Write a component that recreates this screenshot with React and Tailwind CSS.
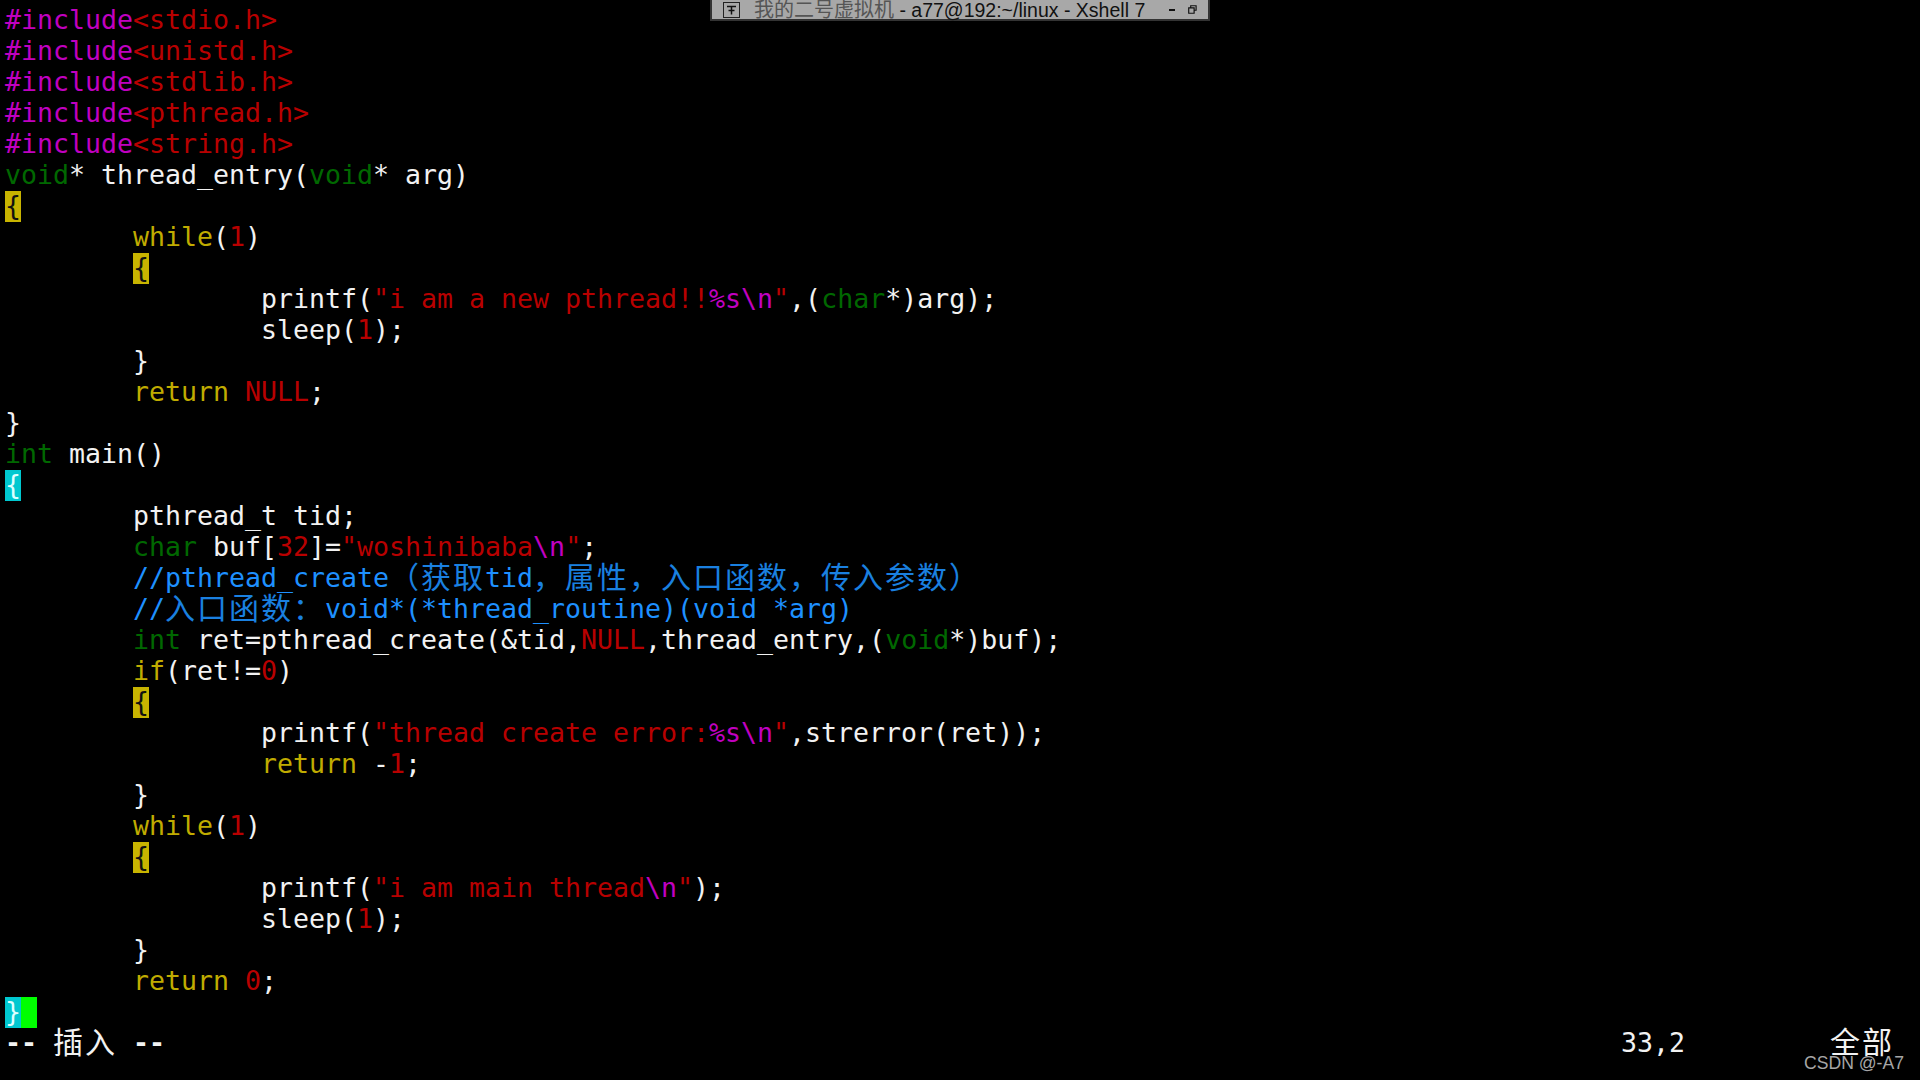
import React from 'react';

const W = 'text-[#f2f2f2]';
const P = 'text-[#c000c0]';
const R = 'text-[#b80000]';
const G = 'text-[#006800]';
const Y = 'text-[#c0ac00]';
const B = 'text-[#1e90ff]';
// the thin CJK strokes read darker than the latin comment text
const BC = 'text-[#1a80e0]';

const TAB = '        ';
const include = (name) => [['#include', P], [`<${name}.h>`, R]];

const MATCH = 'text-[#111] bg-[#c8b400]';
const CYAN = 'text-[#dff] bg-[#00c8d0]';

const lines = [
  include('stdio'),
  include('unistd'),
  include('stdlib'),
  include('pthread'),
  include('string'),
  [['void', G], ['* thread_entry(', W], ['void', G], ['* arg)', W]],
  [['{', MATCH, 'cell']],
  [[TAB, W], ['while', Y], ['(', W], ['1', R], [')', W]],
  [[TAB, W], ['{', MATCH, 'cell']],
  [[TAB + TAB + 'printf(', W], ['"i am a new pthread!!', R], ['%s\\n', P], ['"', R], [',(', W], ['char', G], ['*)arg);', W]],
  [[TAB + TAB + 'sleep(', W], ['1', R], [');', W]],
  [[TAB + '}', W]],
  [[TAB, W], ['return ', Y], ['NULL', R], [';', W]],
  [['}', W]],
  [['int', G], [' main()', W]],
  [['{', CYAN, 'cell']],
  [[TAB + 'pthread_t tid;', W]],
  [[TAB, W], ['char', G], [' buf[', W], ['32', R], [']=', W], ['"woshinibaba', R], ['\\n', P], ['"', R], [';', W]],
  [[TAB + '//pthread_create', B], ['（获取', BC, 'cjk'], ['tid', B], ['，属性，入口函数，传入参数）', BC, 'cjk']],
  [[TAB + '//', B], ['入口函数：', BC, 'cjk'], ['void*(*thread_routine)(void *arg)', B]],
  [[TAB, W], ['int', G], [' ret=pthread_create(&tid,', W], ['NULL', R], [',thread_entry,(', W], ['void', G], ['*)buf);', W]],
  [[TAB, W], ['if', Y], ['(ret!=', W], ['0', R], [')', W]],
  [[TAB, W], ['{', MATCH, 'cell']],
  [[TAB + TAB + 'printf(', W], ['"thread create error:', R], ['%s\\n', P], ['"', R], [',strerror(ret));', W]],
  [[TAB + TAB, W], ['return ', Y], ['-', W], ['1', R], [';', W]],
  [[TAB + '}', W]],
  [[TAB, W], ['while', Y], ['(', W], ['1', R], [')', W]],
  [[TAB, W], ['{', MATCH, 'cell']],
  [[TAB + TAB + 'printf(', W], ['"i am main thread', R], ['\\n', P], ['"', R], [');', W]],
  [[TAB + TAB + 'sleep(', W], ['1', R], [');', W]],
  [[TAB + '}', W]],
  [[TAB, W], ['return ', Y], ['0', R], [';', W]],
  [['}', CYAN, 'cell'], [' ', 'bg-[#00ff00]', 'cell']],
];

const Cjk = ({ text, color = '' }) => (
  <span className={`${color} text-[30px] font-normal leading-[0] align-[-1px] tracking-[2px] font-['Noto_Sans_CJK_SC',sans-serif]`}>{text}</span>
);

const Chunk = ({ text, color, kind }) => {
  if (kind === 'cjk') return <Cjk text={text} color={color} />;
  // highlighted cells fill the whole 31px row, the text still sits on the baseline
  if (kind === 'cell') return <span className={`${color} inline-block align-top w-[16px] h-[31px]`}>{text}</span>;
  return <span className={color}>{text}</span>;
};

const Line = ({ parts }) => (
  <div className="h-[31px] leading-[29px] whitespace-pre">
    {parts.map(([text, color, kind], i) => (
      <Chunk key={i} text={text} color={color} kind={kind} />
    ))}
  </div>
);

const TitleBar = () => (
  <div className="absolute top-0 left-[710px] w-[500px] h-[21px] bg-[#a8a8a8] border-b-2 border-x-2 border-[#333] flex items-center text-[19.5px] leading-[19px] text-[#111] font-['Liberation_Sans',Arial,sans-serif] whitespace-pre">
    <div className="ml-[11px] w-[17px] h-[16px] border border-[#222] flex items-center justify-center">
      <svg width="11" height="11" viewBox="0 0 11 11">
        <path d="M1 2.5h9M5.5 2.5v8M2.5 6.5h6" stroke="#111" strokeWidth="1.5" fill="none" />
      </svg>
    </div>
    <span className="ml-[14px] pt-[2px]">
      <span className="font-['Noto_Sans_CJK_SC',sans-serif] text-[20px] leading-[0] text-[#555]">我的二号虚拟机</span> - a77@192:~/linux - Xshell 7
    </span>
    <span className="ml-auto mr-[11px] flex items-center gap-[13px]">
      <span className="w-[6px] h-[2px] bg-[#111]" />
      <svg width="9" height="9" viewBox="0 0 10 10">
        <path d="M3 3V.8h6v5H7M.8 3.2h6v6h-6z" stroke="#111" strokeWidth="1.3" fill="none" />
      </svg>
    </span>
  </div>
);

export default function App() {
  return (
    <div className="relative w-[1920px] h-[1080px] overflow-hidden bg-black pt-[5px] pl-[5px] text-[26.58px] font-['DejaVu_Sans_Mono',monospace]">
      {lines.map((parts, i) => (
        <Line key={i} parts={parts} />
      ))}

      {/* vim status line */}
      <div className="h-[31px] leading-[29px] whitespace-pre flex text-[#f2f2f2]">
        <span className="w-[1616px] font-bold">
          {'-- '}
          <Cjk text="插入" />
          {' --'}
        </span>
        <span className="w-[209px]">33,2</span>
        <span>
          <Cjk text="全部" />
        </span>
      </div>

      <TitleBar />

      <div className="absolute right-[16px] bottom-[6px] text-[17.6px] leading-[22px] text-[#a6a6a6] font-['Liberation_Sans',Arial,sans-serif]">
        CSDN @-A7
      </div>
    </div>
  );
}
